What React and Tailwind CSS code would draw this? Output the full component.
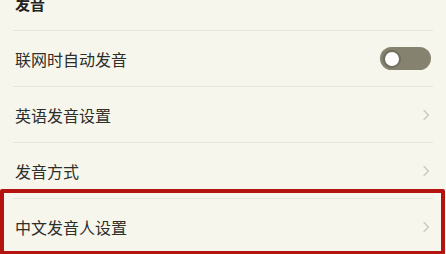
const FONT = { fontFamily: '"Noto Sans CJK SC", "Noto Sans", sans-serif' }

function Chevron() {
  return (
    <svg width="8" height="12" viewBox="0 0 8 12" className="mr-[3px]">
      <path d="M2 1.5 L6.5 6 L2 10.5" fill="none" stroke="#c9c9c0" strokeWidth="1.3" strokeLinecap="round" strokeLinejoin="round" />
    </svg>
  )
}

function Toggle() {
  return (
    <div className="mr-[2px] flex h-[23px] w-[51px] items-center rounded-full bg-[#85826f] px-[3px]">
      <div className="h-[18px] w-[18px] rounded-full border-2 border-[#6f6c5c] bg-white" />
    </div>
  )
}

function Row({ label, right }) {
  return (
    <div className="flex h-[56px] items-center justify-between border-t border-[#e6e6dc] pl-[2px]">
      <span className="text-[16px] text-[#2e2e2b]">{label}</span>
      {right}
    </div>
  )
}

export default function App() {
  return (
    <div className="relative h-[254px] w-[446px] overflow-hidden bg-[#f6f6ec]" style={FONT}>
      <div className="px-[13px]">
        <div className="h-[30px] overflow-hidden pl-[2px]">
          <div className="-mt-[6px] text-[15px] font-bold leading-[20px] text-[#222]">发音</div>
        </div>
        <Row label="联网时自动发音" right={<Toggle />} />
        <Row label="英语发音设置" right={<Chevron />} />
        <Row label="发音方式" right={<Chevron />} />
        <Row label="中文发音人设置" right={<Chevron />} />
      </div>
      <div className="pointer-events-none absolute left-0 top-[189px] h-[66px] w-[445px] rounded-[2px] border-4 border-[#b3140f]" />
    </div>
  )
}
